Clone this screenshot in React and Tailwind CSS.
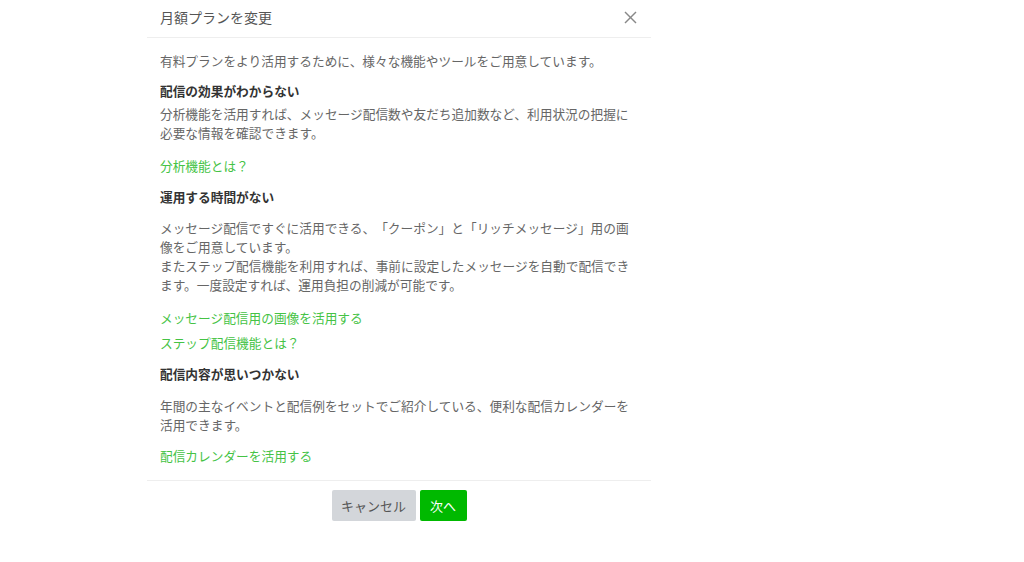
import React from 'react';

const font = { fontFamily: '"Noto Sans CJK JP", "Noto Sans", sans-serif' };

function Link({ children, className = '' }) {
    return (
        <a href="#" className={`block text-[12.7px] leading-[19px] text-[#45c345] ${className}`}>
            {children}
        </a>
    );
}

function Heading({ children, className = '' }) {
    return <h3 className={`text-[12.7px] leading-[19px] font-bold text-[#333] ${className}`}>{children}</h3>;
}

function Body({ children, className = '' }) {
    return <p className={`text-[12.7px] leading-[19px] text-[#666] ${className}`}>{children}</p>;
}

export default function App() {
    return (
        <div className="min-h-screen bg-white [text-spacing-trim:space-all]" style={font}>
            <div className="ml-[147px] w-[504px] bg-white">
                {/* Header */}
                <div className="flex h-[38px] items-center justify-between border-b border-[#eeeeee] pl-[13px] pr-[14px] pb-[2px]">
                    <h2 className="text-[14px] text-[#555]">月額プランを変更</h2>
                    <button className="text-[#888]">
                        <svg width="13" height="13" viewBox="0 0 13 13" stroke="currentColor" strokeWidth="1.4">
                            <line x1="1" y1="1" x2="12" y2="12" />
                            <line x1="12" y1="1" x2="1" y2="12" />
                        </svg>
                    </button>
                </div>

                {/* Content */}
                <div className="px-[13px] pt-[12.5px] pb-[15.5px] border-b border-[#eeeeee]">
                    <Body>有料プランをより活用するために、様々な機能やツールをご用意しています。</Body>

                    <Heading className="mt-[11px]">配信の効果がわからない</Heading>
                    <Body className="mt-[4px]">
                        分析機能を活用すれば、メッセージ配信数や友だち追加数など、利用状況の把握に必要な情報を確認できます。
                    </Body>
                    <Link className="mt-[14px]">分析機能とは？</Link>

                    <Heading className="mt-[12px]">運用する時間がない</Heading>
                    <Body className="mt-[12px]">
                        メッセージ配信ですぐに活用できる、「クーポン」と「リッチメッセージ」用の画像をご用意しています。
                        <br />
                        またステップ配信機能を利用すれば、事前に設定したメッセージを自動で配信できます。一度設定すれば、運用負担の削減が可能です。
                    </Body>
                    <Link className="mt-[14px]">メッセージ配信用の画像を活用する</Link>
                    <Link className="mt-[6px]">ステップ配信機能とは？</Link>

                    <Heading className="mt-[12px]">配信内容が思いつかない</Heading>
                    <Body className="mt-[13px]">
                        年間の主なイベントと配信例をセットでご紹介している、便利な配信カレンダーを活用できます。
                    </Body>
                    <Link className="mt-[12px]">配信カレンダーを活用する</Link>
                </div>

                {/* Footer */}
                <div className="flex justify-center gap-[4px] pt-[9px] pb-[20px]">
                    <button className="h-[31px] w-[84px] rounded-[2px] bg-[#d3d6da] text-[13px] text-[#555]">キャンセル</button>
                    <button className="h-[31px] w-[47px] rounded-[2px] bg-[#00b900] text-[13px] text-white">次へ</button>
                </div>
            </div>
        </div>
    );
}
